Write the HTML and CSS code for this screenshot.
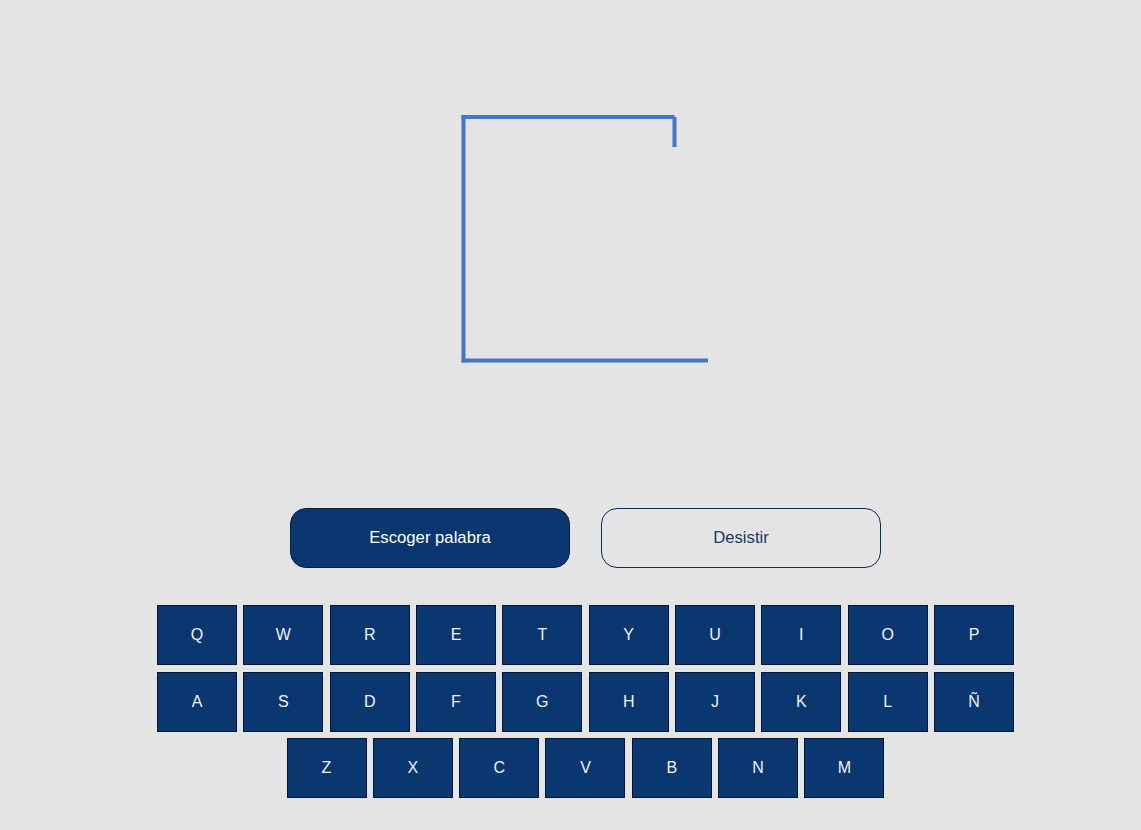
FILE: index.html
```html
<!DOCTYPE html>
<html lang="es">
<head>
<meta charset="utf-8">
<title>Ahorcado</title>
<link rel="stylesheet" href="styles.css">
</head>
<body>
<main class="game">
  <svg class="gallows" width="301" height="280" viewBox="0 0 301 280" xmlns="http://www.w3.org/2000/svg">
    <g stroke="#4674c8" stroke-width="4" fill="none" stroke-linecap="butt">
      <line x1="28.5" y1="15" x2="28.5" y2="262.5"/>
      <line x1="26.5" y1="17" x2="239.5" y2="17"/>
      <line x1="239.5" y1="17" x2="239.5" y2="47"/>
      <line x1="26.5" y1="260.5" x2="273" y2="260.5"/>
    </g>
  </svg>
  <div class="actions">
    <button class="btn btn-primary">Escoger palabra</button>
    <button class="btn btn-outline">Desistir</button>
  </div>
  <div class="keyboard">
    <div class="key-row">
      <button class="key">Q</button><button class="key">W</button><button class="key">R</button><button class="key">E</button><button class="key">T</button><button class="key">Y</button><button class="key">U</button><button class="key">I</button><button class="key">O</button><button class="key">P</button>
    </div>
    <div class="key-row">
      <button class="key">A</button><button class="key">S</button><button class="key">D</button><button class="key">F</button><button class="key">G</button><button class="key">H</button><button class="key">J</button><button class="key">K</button><button class="key">L</button><button class="key">Ñ</button>
    </div>
    <div class="key-row">
      <button class="key">Z</button><button class="key">X</button><button class="key">C</button><button class="key">V</button><button class="key">B</button><button class="key">N</button><button class="key">M</button>
    </div>
  </div>
</main>
</body>
</html>
```

FILE: styles.css
```css
html, body {
  margin: 0;
  padding: 0;
  background: #e4e4e4;
  font-family: "Liberation Sans", Arial, sans-serif;
}

.game {
  padding-left: 30px;
  display: flex;
  flex-direction: column;
  align-items: center;
  min-height: 830px;
  box-sizing: border-box;
}

.gallows {
  display: block;
  margin-top: 100px;
}

.actions {
  display: flex;
  gap: 31px;
  margin-top: 128px;
}

.btn {
  width: 280px;
  height: 60px;
  border-radius: 16px;
  font-family: "Liberation Sans", Arial, sans-serif;
  font-size: 16.7px;
  cursor: pointer;
  box-sizing: border-box;
  padding: 0;
}

.btn-primary {
  background: #0a3770;
  color: #ffffff;
  border: 1px solid #06214a;
}

.btn-outline {
  background: transparent;
  color: #1c3766;
  border: 1px solid #0a2c5e;
}

.keyboard {
  margin-top: 37px;
  display: flex;
  flex-direction: column;
  align-items: center;
  gap: 6.5px;
}

.key-row {
  display: flex;
  gap: 6.33px;
}

.key {
  width: 80px;
  height: 60px;
  box-sizing: border-box;
  background: #0a3770;
  color: #f2f2f2;
  border: 1px solid #041636;
  font-family: "Liberation Sans", Arial, sans-serif;
  font-size: 16px;
  padding: 0;
  cursor: pointer;
}
```
